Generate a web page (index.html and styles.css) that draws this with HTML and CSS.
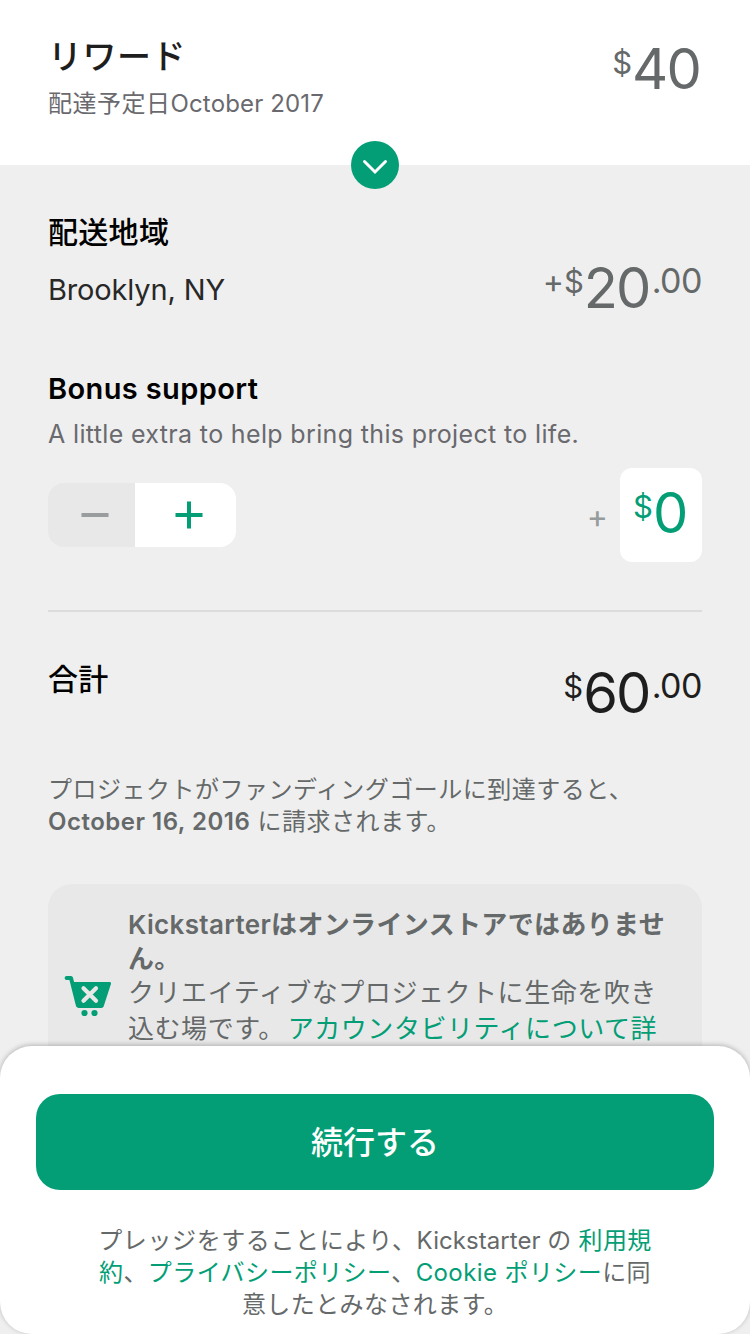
FILE: index.html
```html
<!DOCTYPE html>
<html lang="ja">
<head>
<meta charset="utf-8">
<title>リワード</title>
<link rel="stylesheet" href="styles.css">
</head>
<body>
<div class="screen">
  <header class="reward">
    <div class="reward-info">
      <h1 class="reward-title">リワード</h1>
      <p class="reward-date">配達予定日<span class="lat-date">October 2017</span></p>
    </div>
    <div class="price price-reward"><span class="small currency">$</span><span class="big">40</span></div>
    <button class="expand" aria-label="expand">
      <svg width="48" height="48" viewBox="0 0 48 48"><path d="M13.500 20.500 24 31 34.500 20.500" fill="none" stroke="#fff" stroke-width="3" stroke-linecap="round"/></svg>
    </button>
  </header>

  <main class="content">
    <section class="row shipping">
      <div>
        <h2 class="heading jp">配送地域</h2>
        <p class="place">Brooklyn, NY</p>
      </div>
      <div class="price price-shipping"><span class="small plus-sign">+</span><span class="small currency">$</span><span class="big">20</span><span class="small cents">.00</span></div>
    </section>

    <section class="bonus">
      <h2 class="heading lat">Bonus support</h2>
      <p class="hint">A little extra to help bring this project to life.</p>
      <div class="row bonus-row">
        <div class="stepper">
          <button class="minus" aria-label="minus"><svg width="30" height="30" viewBox="0 0 30 30"><path d="M1.500 15H28.500" stroke="#999d9d" stroke-width="4"/></svg></button>
          <button class="plus" aria-label="plus"><svg width="30" height="30" viewBox="0 0 30 30"><path d="M1.500 15H28.500M15 1.500V28.500" stroke="#039e75" stroke-width="4"/></svg></button>
        </div>
        <div class="amount">
          <span class="amount-plus">+</span>
          <div class="price amount-box"><span class="small currency">$</span><span class="big">0</span></div>
        </div>
      </div>
    </section>

    <section class="row total">
      <h2 class="heading jp">合計</h2>
      <div class="price price-total"><span class="small currency">$</span><span class="big">60</span><span class="small cents">.00</span></div>
    </section>

    <p class="note">プロジェクトがファンディングゴールに到達すると、<br><b>October 16, 2016</b> に請求されます。</p>

    <section class="notice">
      <svg class="cart" width="48" height="42" viewBox="0 0 48 42">
        <path d="M2.600 3.100H7L13.800 30" fill="none" stroke="#039e75" stroke-width="4" stroke-linecap="round" stroke-linejoin="round"/>
        <path d="M7.500 7H45.800Q47.400 7 47 8.800L39.700 31.300Q39.100 33 37.500 33H14.500Q13 33 12.500 31.300Z" fill="#039e75"/>
        <circle cx="20.500" cy="38" r="3.100" fill="#039e75"/><circle cx="30.500" cy="38" r="3.100" fill="#039e75"/>
        <path d="M19.500 13.300 32 25.800M32 13.300 19.500 25.800" stroke="#e8e8e8" stroke-width="4.200" stroke-linecap="round"/>
      </svg>
      <div class="notice-text">
        <p class="notice-bold">Kickstarterはオンラインストアではありません。</p>
        <p class="notice-line">クリエイティブなプロジェクトに生命を吹き</p>
        <p class="notice-line last">込む場です。<a class="learn">アカウンタビリティについて詳</a></p>
      </div>
    </section>
  </main>

  <footer class="sheet">
    <button class="continue">続行する</button>
    <p class="legal"><span class="legal-lead">プレッジをすることにより、</span><span class="legal-name">Kickstarter の</span> <a>利用規</a><br><a>約</a>、<a>プライバシーポリシー</a>、<a>Cookie ポリシー</a>に同<br>意したとみなされます。</p>
  </footer>
</div>
</body>
</html>
```
FILE: styles.css
```css
* { box-sizing: border-box; }
html, body, h1, h2, p { margin: 0; padding: 0; }
body { font-family: Inter, "Noto Sans CJK JP", sans-serif; background: #efefef; }
button { border: 0; padding: 0; margin: 0; font-family: inherit; }
a { color: #039e75; }

.screen { position: relative; width: 750px; height: 1334px; overflow: hidden; background: #efefef; }

.reward { position: relative; display: flex; justify-content: space-between; height: 165px; padding: 37px 48px 0; background: #fff; }
.reward-title { font-size: 34px; line-height: 40px; font-weight: 500; letter-spacing: 0.5px; color: #1e1e1e; white-space: nowrap; }
.reward-date { margin-top: 11px; font-size: 24px; line-height: 32px; letter-spacing: 0.5px; color: #69696e; white-space: nowrap; }
.lat-date { letter-spacing: 0.15px; }
.expand { position: absolute; left: 351px; bottom: -24px; width: 48px; height: 48px; border-radius: 50%; background: #039e75; }
.expand svg { display: block; }

.price { display: flex; align-items: flex-start; color: #656969; white-space: nowrap; }
.big { font-size: 56px; line-height: 60px; letter-spacing: -1.8px; }
.small { padding-top: 3px; font-size: 34px; line-height: 40px; letter-spacing: -0.9px; }
.currency { padding-top: 4px; font-size: 31px; letter-spacing: 0; }
.plus-sign { padding-top: 4px; font-size: 32px; letter-spacing: 0; }
.cents { padding-left: 2px; letter-spacing: -0.5px; }
.price-reward { margin-top: 2px; margin-right: 2px; }
.price-shipping { margin-top: 46px; }
.price-total { margin-top: 4px; color: #1e1e1e; }

.content { padding: 47px 48px 0; }
.row { display: flex; justify-content: space-between; }
.heading { font-size: 30px; line-height: 40px; color: #000; white-space: nowrap; }
.heading.jp { font-weight: 500; letter-spacing: 0.3px; }
.heading.lat { font-size: 29px; font-weight: 600; letter-spacing: 0.38px; }
.shipping { height: 157px; }
.place { margin-top: 18px; font-size: 29px; line-height: 40px; letter-spacing: -0.15px; color: #282828; }
.hint { margin-top: 9px; font-size: 25px; line-height: 32px; letter-spacing: 0.35px; color: #69696e; white-space: nowrap; }
.bonus { height: 243px; border-bottom: 2px solid #dcdcdc; }
.bonus-row { margin-top: 18px; align-items: center; }
.stepper { display: flex; width: 188px; height: 64px; border-radius: 16px; overflow: hidden; }
.stepper button { display: flex; align-items: center; justify-content: center; }
.minus { width: 87px; padding-left: 7px; background: #e8e8e8; }
.plus { width: 101px; padding-left: 7px; background: #fff; }
.amount { display: flex; align-items: center; gap: 12px; }
.amount-plus { padding-top: 4px; font-size: 32px; line-height: 40px; color: #969b9b; }
.amount-box { width: 82px; height: 94px; padding: 15px 0 0 13px; border-radius: 12px; background: #fff; color: #039e75; }

.total { padding-top: 47px; height: 162px; }
.note { height: 110px; font-size: 24px; line-height: 32px; letter-spacing: 0.5px; color: #656969; white-space: nowrap; }
.note b { font-weight: 600; }

.notice { display: flex; height: 240px; padding: 24px 16px 0; gap: 16px; border-radius: 24px; background: #e8e8e8; color: #656969; }
.cart { flex: none; margin-top: 67px; }
.notice-text { width: 558px; margin-right: -20px; font-size: 26px; letter-spacing: 0.55px; }
.notice-bold { width: 545px; line-height: 34px; font-weight: 600; letter-spacing: 0.35px; }
.notice-line { line-height: 34px; white-space: nowrap; }
.notice-line.last { line-height: 38px; }
.learn { margin-left: 3px; }

.sheet { position: absolute; left: 0; top: 1046px; width: 750px; height: 288px; padding: 48px 36px 0; border-radius: 32px; background: #fff; box-shadow: 0 -1px 5px rgba(0, 0, 0, 0.25); }
.continue { display: block; width: 678px; height: 96px; padding-bottom: 5px; border-radius: 24px; background: #039e75; color: #fff; font-size: 32px; font-weight: 500; }
.legal { margin-top: 35px; font-size: 24px; line-height: 32px; letter-spacing: 0.41px; color: #656969; text-align: center; white-space: nowrap; }
.legal-lead { letter-spacing: 0.6px; }
.legal-name { letter-spacing: 0.05px; }
```
